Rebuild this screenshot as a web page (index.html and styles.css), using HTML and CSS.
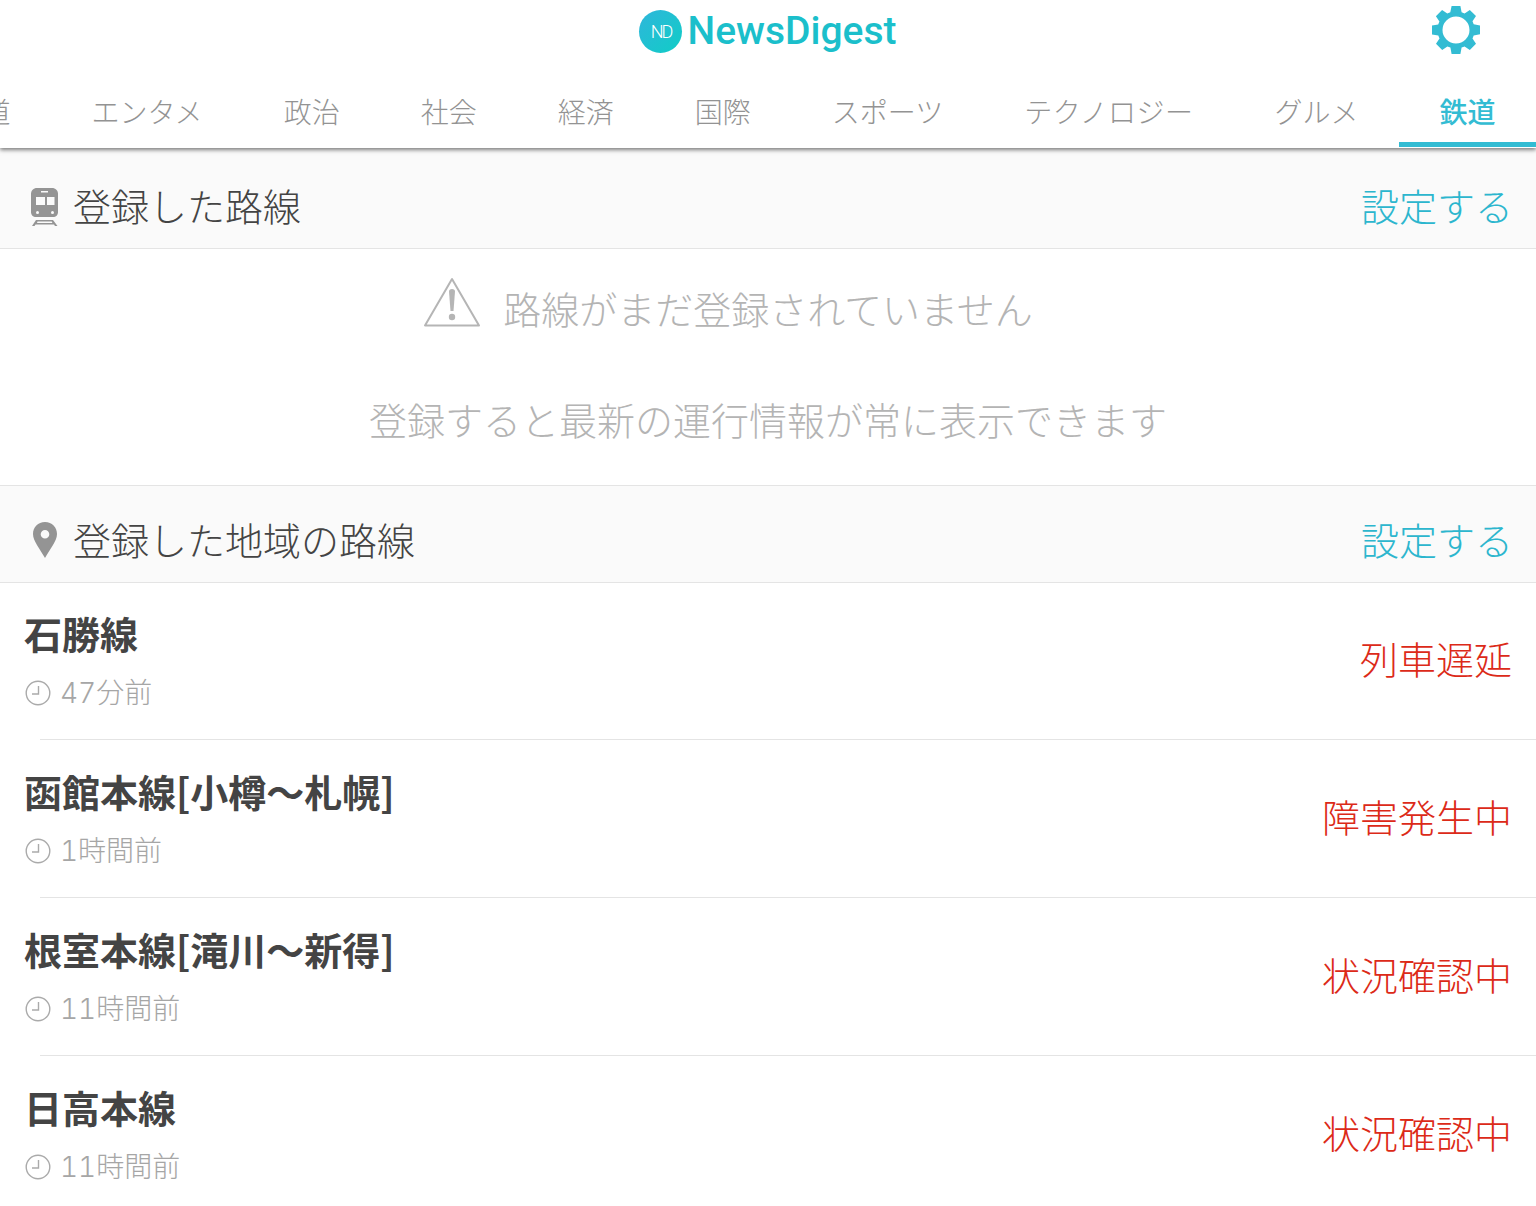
FILE: index.html
```html
<!DOCTYPE html>
<html lang="ja">
<head>
<meta charset="utf-8">
<title>NewsDigest</title>
<link rel="stylesheet" href="styles.css">
</head>
<body>
<header class="top">
  <div class="brandbar">
    <div class="brand">
      <span class="badge"><span class="badge-text">ND</span></span>
      <span class="brand-name">NewsDigest</span>
    </div>
    <svg class="gear" viewBox="0 0 48 48" aria-hidden="true"><path fill-rule="evenodd" fill="#33bcd3" d="M19.6 0h8.8l1.2 6.2 3 1.2 5.2-3.5 6.2 6.2-3.5 5.2 1.2 3 6.3 1.2v8.8l-6.3 1.2-1.2 3 3.5 5.2-6.2 6.2-5.2-3.5-3 1.2-1.2 6.3h-8.8l-1.2-6.3-3-1.2-5.2 3.5-6.2-6.2 3.5-5.2-1.2-3L0 28.4v-8.8l6.2-1.2 1.2-3-3.5-5.2 6.2-6.2 5.2 3.5 3-1.2zM24 10.5a13.5 13.5 0 1 0 0 27 13.5 13.5 0 0 0 0-27z"/></svg>
  </div>
  <nav class="tabs">
    <span class="tab">報道</span>
    <span class="tab">エンタメ</span>
    <span class="tab">政治</span>
    <span class="tab">社会</span>
    <span class="tab">経済</span>
    <span class="tab">国際</span>
    <span class="tab">スポーツ</span>
    <span class="tab tab-wide">テクノロジー</span>
    <span class="tab">グルメ</span>
    <span class="tab active">鉄道</span>
  </nav>
</header>

<section class="sec-head first">
  <div class="sec-title">
    <svg class="sec-icon" viewBox="0 0 28 40" aria-hidden="true"><path fill="#949494" d="M6 1h15c3.500 0 6 2.500 6 6v18c0 3-2 5-5 5H5c-3 0-5-2-5-5V7c0-3.500 2.500-6 6-6z"/><path fill="#fafafa" d="M10 4h7v1.500h-7zM5 10h9v8H5zM16 10h7.500v8H16z"/><circle cx="6.500" cy="25.500" r="1.500" fill="#fafafa"/><circle cx="21.500" cy="25.500" r="1.500" fill="#fafafa"/><path fill="#949494" d="M5 33h17l4.500 6h-2.500l-1-1.500H4.500L3.500 39H1zM6.500 34.500 6 36h15.500l-.8-1.500z"/></svg>
    <span>登録した路線</span>
  </div>
  <a class="sec-link">設定する</a>
</section>

<section class="empty">
  <p class="empty-main">
    <svg class="warn" viewBox="0 0 58 50" aria-hidden="true"><path fill="none" stroke="#b5b5b5" stroke-width="2" stroke-linejoin="round" d="M29 2 2 48.500h54z"/><path fill="#b5b5b5" d="M26 14.500c0-1.500 1-2.500 3-2.500s3 1 3 2.500L30.500 34h-3z"/><circle cx="29" cy="40" r="3.200" fill="#b5b5b5"/></svg>
    <span>路線がまだ登録されていません</span>
  </p>
  <p class="empty-sub">登録すると最新の運行情報が常に表示できます</p>
</section>

<section class="sec-head">
  <div class="sec-title">
    <svg class="sec-icon pin" viewBox="0 0 24 36" aria-hidden="true"><path fill="#949494" fill-rule="evenodd" d="M12 0C5 0 0 5 0 12c0 7 7 15 12 24 5-9 12-17 12-24C24 5 19 0 12 0zm0 8a4.300 4.300 0 1 1 0 8.600A4.300 4.300 0 0 1 12 8z"/></svg>
    <span>登録した地域の路線</span>
  </div>
  <a class="sec-link">設定する</a>
</section>

<ul class="lines">
  <li class="line">
    <div class="line-body">
      <h3 class="line-name">石勝線</h3>
      <div class="line-time"><svg class="clock" viewBox="0 0 26 26" aria-hidden="true"><circle cx="13" cy="13" r="11.800" fill="none" stroke="#aaa" stroke-width="1.400"/><path fill="none" stroke="#aaa" stroke-width="1.400" d="M13.500 6v8H7"/></svg><span>47分前</span></div>
    </div>
    <span class="line-status">列車遅延</span>
  </li>
  <li class="line">
    <div class="line-body">
      <h3 class="line-name">函館本線[小樽〜札幌]</h3>
      <div class="line-time"><svg class="clock" viewBox="0 0 26 26" aria-hidden="true"><circle cx="13" cy="13" r="11.800" fill="none" stroke="#aaa" stroke-width="1.400"/><path fill="none" stroke="#aaa" stroke-width="1.400" d="M13.500 6v8H7"/></svg><span>1時間前</span></div>
    </div>
    <span class="line-status">障害発生中</span>
  </li>
  <li class="line">
    <div class="line-body">
      <h3 class="line-name">根室本線[滝川〜新得]</h3>
      <div class="line-time"><svg class="clock" viewBox="0 0 26 26" aria-hidden="true"><circle cx="13" cy="13" r="11.800" fill="none" stroke="#aaa" stroke-width="1.400"/><path fill="none" stroke="#aaa" stroke-width="1.400" d="M13.500 6v8H7"/></svg><span>11時間前</span></div>
    </div>
    <span class="line-status">状況確認中</span>
  </li>
  <li class="line">
    <div class="line-body">
      <h3 class="line-name">日高本線</h3>
      <div class="line-time"><svg class="clock" viewBox="0 0 26 26" aria-hidden="true"><circle cx="13" cy="13" r="11.800" fill="none" stroke="#aaa" stroke-width="1.400"/><path fill="none" stroke="#aaa" stroke-width="1.400" d="M13.500 6v8H7"/></svg><span>11時間前</span></div>
    </div>
    <span class="line-status">状況確認中</span>
  </li>
</ul>
</body>
</html>
```
FILE: styles.css
```css
* { box-sizing: border-box; }
html, body { margin: 0; padding: 0; }
body {
  background: #fff;
  font-family: "Noto Sans CJK JP", "Noto Sans", sans-serif;
  font-weight: 300;
  height: 1206px;
  overflow: hidden;
}
.top {
  height: 148px;
  background: #fff;
  box-shadow: 0 2px 4px rgba(0,0,0,.5);
  position: relative;
}
.brandbar {
  height: 76px;
  display: flex;
  align-items: flex-start;
  justify-content: center;
  position: relative;
}
.brand { display: flex; align-items: center; gap: 5px; height: 62px; }
.badge {
  width: 43px;
  height: 43px;
  border-radius: 50%;
  background: linear-gradient(135deg, #2fb6db, #10cdc6);
  display: flex;
  align-items: center;
  justify-content: center;
}
.badge-text {
  font-family: "Roboto", sans-serif;
  font-size: 18px;
  font-weight: 300;
  color: #fff;
  letter-spacing: -2px;
}
.brand-name {
  font-family: "Roboto", sans-serif;
  font-weight: 500;
  font-size: 39px;
  color: #1bbfcb;
}
.gear {
  position: absolute;
  right: 56px;
  top: 6px;
  width: 48px;
  height: 48px;
}
.tabs {
  height: 71px;
  display: flex;
  justify-content: flex-end;
  overflow: hidden;
}
.tab {
  flex: none;
  padding: 0 40.5px;
  height: 71px;
  line-height: 70px;
  font-size: 28px;
  color: #939393;
  white-space: nowrap;
}
.tab-wide { letter-spacing: .5px; }
.tab.active {
  color: #33bcd3;
  font-weight: 500;
  border-bottom: 5px solid #33bcd3;
}
.sec-head {
  height: 97px;
  padding: 8px 23px 0 30px;
  background: #fafafa;
  border-bottom: 1px solid #e4e4e4;
  display: flex;
  align-items: center;
  justify-content: space-between;
}
.sec-head.first { height: 101px; padding-top: 13px; }
.sec-title {
  display: flex;
  align-items: center;
  font-size: 38px;
  color: #444;
}
.sec-icon { width: 30px; height: 40px; margin: 4px 13px 0 0; flex: none; }
.sec-icon.pin { width: 24px; height: 36px; margin: 4px 16px 0 3px; }
.sec-link { font-size: 38px; color: #2cb6ce; }
.empty {
  height: 237px;
  border-bottom: 1px solid #e4e4e4;
  color: #b4b4b4;
  font-size: 38px;
  text-align: center;
}
.empty p { margin: 0; }
.empty-main {
  display: flex;
  justify-content: center;
  align-items: center;
  gap: 22px;
  height: 116px;
}
.warn { width: 58px; height: 50px; margin: 0 0 10px -80px; }
.empty .empty-sub { height: 100px; line-height: 100px; margin-top: 4px; }
.lines { list-style: none; margin: -2px 0 0; padding: 0; }
.line {
  height: 158px;
  padding: 0 24px 0 25px;
  display: flex;
  align-items: center;
  justify-content: space-between;
  position: relative;
}
.line + .line::before {
  content: "";
  position: absolute;
  left: 40px;
  right: 0;
  top: 0;
  border-top: 1px solid #e4e4e4;
}
.line-body { align-self: flex-start; padding-top: 24px; }
.line-name {
  margin: 0 0 0 -1px;
  font-size: 38px;
  font-weight: 700;
  color: #444;
  line-height: 56px;
}
.line-time {
  display: flex;
  align-items: center;
  font-family: "Inter", "Noto Sans CJK JP", sans-serif;
  font-variant-numeric: tabular-nums;
  font-size: 28px;
  color: #a6a6a6;
  line-height: 50px;
  margin-top: 7px;
}
.clock { width: 26px; height: 26px; margin-right: 9px; flex: none; }
.line-status { font-size: 38px; color: #dc2a18; padding-bottom: 6px; }
```
